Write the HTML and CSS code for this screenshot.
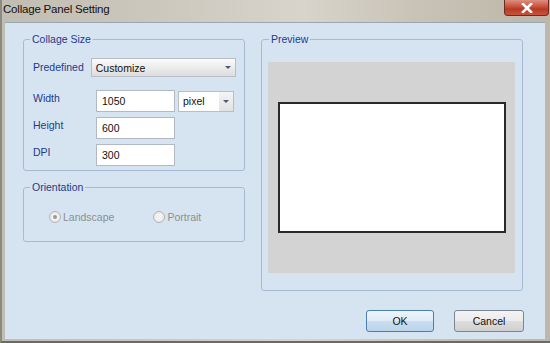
FILE: index.html
```html
<!DOCTYPE html>
<html lang="en">
<head>
<meta charset="UTF-8">
<title>Collage Panel Setting</title>
<link rel="stylesheet" href="styles.css">
</head>
<body>

<div class="window">
    <div class="titlebar">
        <span class="title">Collage Panel Setting</span>
        <span class="close">
            <svg width="14" height="10" viewBox="0 0 14 10">
                <path d="M3 1 L11 9 M11 1 L3 9" stroke="#fff" stroke-width="2.6" stroke-linecap="square"/>
            </svg>
        </span>
    </div>

    <div class="client">
        <div class="main">
            <div class="left">
                <!-- Collage size group -->
                <fieldset class="group size-group">
                    <legend>Collage Size</legend>
                    <div class="row first">
                        <label>Predefined</label>
                        <div class="combo wide">
                            <span>Customize</span>
                            <span class="arrow"></span>
                        </div>
                    </div>
                    <div class="row">
                        <label>Width</label>
                        <input class="field" type="text" value="1050">
                        <div class="combo unit">
                            <span>pixel</span>
                            <span class="arrow"></span>
                        </div>
                    </div>
                    <div class="row">
                        <label>Height</label>
                        <input class="field" type="text" value="600">
                    </div>
                    <div class="row">
                        <label>DPI</label>
                        <input class="field" type="text" value="300">
                    </div>
                </fieldset>

                <!-- Orientation group -->
                <fieldset class="group orient-group">
                    <legend>Orientation</legend>
                    <div class="radios">
                        <span class="radio checked"><i></i>Landscape</span>
                        <span class="radio"><i></i>Portrait</span>
                    </div>
                </fieldset>
            </div>

            <fieldset class="group preview-group">
                <legend>Preview</legend>
                <div class="canvas">
                    <div class="sheet"></div>
                </div>
            </fieldset>
        </div>

        <div class="footer">
            <button class="btn default">OK</button>
            <button class="btn cancel">Cancel</button>
        </div>
    </div>
</div>

</body>
</html>
```

FILE: styles.css
```css
body {
    margin: 0;
    padding: 0;
    font-family: "Liberation Sans", Arial, sans-serif;
}

.window {
    width: 550px;
    height: 343px;
    display: flex;
    flex-direction: column;
    background: linear-gradient(90deg, #c2bdb2 0%, #cdc8be 30%, #d8d4cb 55%, #c9c3b7 75%, #bdb6a9 100%);
    box-sizing: border-box;
    border-left: 2px solid #8d8a80;
    border-bottom: 2px solid #6b6a66;
}

/* Title bar */
.titlebar {
    height: 22px;
    display: flex;
    justify-content: space-between;
    align-items: flex-start;
}

.title {
    font-size: 11.5px;
    letter-spacing: -0.2px;
    color: #111;
    padding: 3px 0 0 1px;
}

.close {
    width: 45px;
    height: 16px;
    margin-right: 1px;
    display: flex;
    align-items: center;
    justify-content: center;
    background: linear-gradient(#dc8f80 0%, #c8503b 45%, #b63a24 60%, #c9553c 100%);
    border: 1px solid #6e2a1d;
    border-top: none;
    border-radius: 0 0 4px 4px;
    box-sizing: border-box;
}

/* Client area */
.client {
    flex: 1;
    margin: 0 5px 2px 3px;
    background-color: #d6e4f2;
    border-top: 1px solid #9aa6b3;
    padding: 10px 20px 0 18px;
    display: flex;
    flex-direction: column;
}

.main {
    display: flex;
    gap: 16px;
}

.left {
    width: 222px;
    display: flex;
    flex-direction: column;
    gap: 10px;
}

/* Group boxes */
.group {
    margin: 0;
    min-width: 0;
    border: 1px solid #a6bbd1;
    border-radius: 3px;
    padding: 0;
    font-size: 10.5px;
}

.group legend {
    color: #1e3a8a;
    padding: 0 2px;
    line-height: 13px;
}

.size-group {
    padding: 12px 8px 4px 9px;
    display: flex;
    flex-direction: column;
    gap: 5px;
}

.size-group legend {
    margin-left: -3px;
}

.row {
    display: flex;
    align-items: center;
    height: 22px;
}

.row.first {
    height: 19px;
    margin-bottom: 8px;
}

.row label {
    width: 58px;
    color: #1e3a8a;
    margin-top: -7px;
}

.row.first label {
    margin-top: -2px;
}

.field {
    width: 79px;
    height: 22px;
    box-sizing: border-box;
    margin-left: 5px;
    border: 1px solid #b0b9c4;
    padding: 0 5px;
    font-family: inherit;
    font-size: 10.5px;
    color: #111;
    background-color: #fff;
}

.combo {
    height: 19px;
    box-sizing: border-box;
    display: flex;
    align-items: center;
    justify-content: space-between;
    border: 1px solid #b8bec6;
    color: #111;
    font-size: 10.5px;
    padding-left: 4px;
}

.combo.wide {
    width: 146px;
    background: linear-gradient(#fbfbfb 0%, #ececec 50%, #dcdcdc 100%);
}

.combo.unit {
    width: 56px;
    height: 21px;
    margin-left: 3px;
    background-color: #fff;
}

.arrow {
    width: 14px;
    height: 100%;
    display: flex;
    align-items: center;
    justify-content: center;
}

.combo.unit .arrow {
    background: linear-gradient(#f4f4f4, #e2e2e2);
}

.arrow::after {
    content: '';
    border-left: 3px solid transparent;
    border-right: 3px solid transparent;
    border-top: 3px solid #4a5a70;
}

/* Orientation */
.orient-group {
    padding: 17px 0 18px 25px;
}

.orient-group legend {
    margin-left: -19px;
}

.radios {
    display: flex;
    gap: 39px;
}

.radio {
    display: flex;
    align-items: center;
    gap: 2px;
    color: #8e8e8e;
    font-size: 10.5px;
}

.radio i {
    width: 10px;
    height: 10px;
    border: 1px solid #b5b5b5;
    border-radius: 50%;
    background: radial-gradient(circle, #f2f2f2 40%, #dcdcdc 100%);
    display: flex;
    align-items: center;
    justify-content: center;
}

.radio.checked i::after {
    content: '';
    width: 4px;
    height: 4px;
    border-radius: 50%;
    background-color: #9a9a9a;
}

/* Preview */
.preview-group {
    width: 262px;
    box-sizing: border-box;
    padding: 16px 7px 17px 6px;
}

.preview-group legend {
    margin-left: 1px;
}

.canvas {
    height: 211px;
    background-color: #d3d3d3;
    display: flex;
    align-items: center;
    justify-content: center;
}

.sheet {
    width: 228px;
    height: 131px;
    box-sizing: border-box;
    border: 2px solid #2a2a2a;
    background-color: #fff;
}

/* Buttons */
.footer {
    display: flex;
    justify-content: flex-end;
    gap: 20px;
    margin-top: 19px;
    margin-right: 1px;
}

.btn {
    height: 22px;
    width: 68px;
    border: 1px solid #7b8594;
    border-radius: 3px;
    background: linear-gradient(#f4f4f4 0%, #ebebeb 48%, #dddddd 52%, #d0d0d0 100%);
    font-family: inherit;
    font-size: 10.5px;
    color: #111;
    padding: 0;
}

.btn.cancel {
    width: 70px;
}

.btn.default {
    border-color: #4a7fb3;
    background: linear-gradient(#eef5fb 0%, #dfecf7 48%, #c9ddef 52%, #bcd4ea 100%);
}
```
